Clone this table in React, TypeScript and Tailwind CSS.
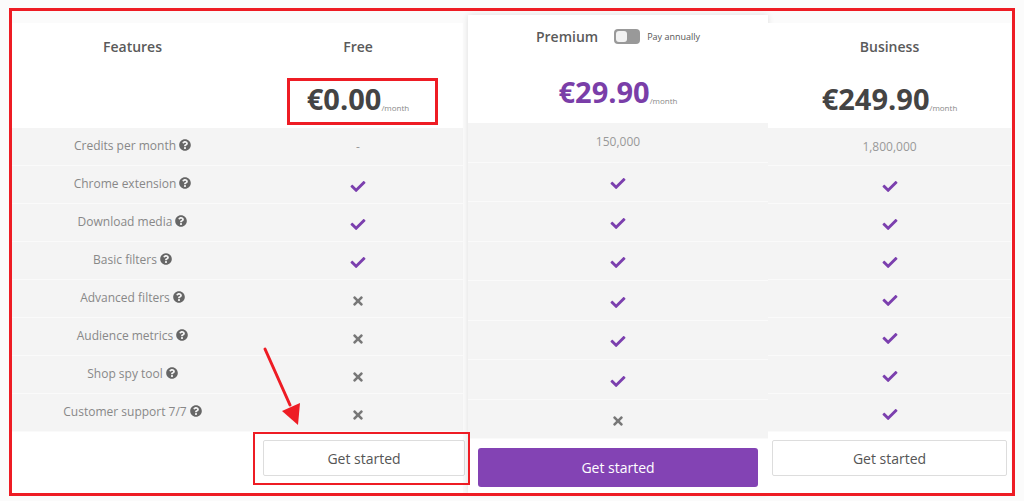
import React from "react";
import { FaCheck, FaTimes, FaQuestionCircle } from "react-icons/fa";

type Cell = "check" | "x" | string;

const features = [
  "Credits per month",
  "Chrome extension",
  "Download media",
  "Basic filters",
  "Advanced filters",
  "Audience metrics",
  "Shop spy tool",
  "Customer support 7/7",
];

const free: Cell[] = ["-", "check", "check", "check", "x", "x", "x", "x"];
const premium: Cell[] = ["150,000", "check", "check", "check", "check", "check", "check", "x"];
const business: Cell[] = ["1,800,000", "check", "check", "check", "check", "check", "check", "check"];

function CellContent({ v }: { v: Cell }) {
  if (v === "check") return <FaCheck className="text-[#7b3fae] w-[18px] h-[15px] mt-[4px]" />;
  if (v === "x") return <FaTimes className="text-[#777] w-[12px] h-[14px] mt-[4px]" />;
  return <span className="text-[12px] text-[#999]">{v}</span>;
}

function Rows({ cells, h }: { cells: Cell[]; h: string }) {
  return (
    <div className="flex flex-col bg-[#f4f4f4]">
      {cells.map((c, i) => (
        <div
          key={i}
          className={`flex justify-center items-center border-b border-[#fafafa] ${h}`}
        >
          <CellContent v={c} />
        </div>
      ))}
    </div>
  );
}

function Price({ amount, purple }: { amount: string; purple?: boolean }) {
  return (
    <div className="flex items-end justify-center">
      <span
        className={`text-[29px] font-bold leading-none ${
          purple ? "text-[#7a3ea8]" : "text-[#444]"
        }`}
      >
        {amount}
      </span>
      <span className="text-[8px] text-[#888] leading-none mb-[1px]">/month</span>
    </div>
  );
}

export default function App() {
  return (
    <div
      className="relative w-[1024px] h-[501px] bg-[#fbfbfb] overflow-hidden"
      style={{ fontFamily: "'Open Sans', 'Liberation Sans', sans-serif" }}
    >
      <div className="flex items-start pl-[12px] pt-[15px]">
        {/* Features */}
        <div className="w-[241px] mt-[8px] flex flex-col">
          <div className="h-[105px] bg-white flex justify-center pt-[13px]">
            <span className="text-[14px] font-semibold text-[#5a5a5a]">Features</span>
          </div>
          <div className="flex flex-col bg-[#f4f4f4]">
            {features.map((f) => (
              <div
                key={f}
                className="h-[38px] flex justify-center items-center border-b border-[#fafafa] pb-[1px]"
              >
                <span className="text-[12px] text-[#888]">{f}</span>
                <FaQuestionCircle className="text-[#666] w-[12px] h-[12px] ml-[3px] -mt-[3px]" />
              </div>
            ))}
          </div>
          <div className="h-[61px] bg-white" />
        </div>

        {/* Free */}
        <div className="w-[210px] mt-[8px] flex flex-col">
          <div className="h-[105px] bg-white flex flex-col items-center pt-[13px]">
            <span className="text-[14px] font-semibold text-[#5a5a5a]">Free</span>
            <div className="mt-[27px]">
              <Price amount="€0.00" />
            </div>
          </div>
          <Rows cells={free} h="h-[38px]" />
          <div className="h-[61px] bg-white pt-[8px] pl-[10px] pr-[0px]">
            <button className="w-[202px] h-[36px] border border-[#ddd] rounded-[2px] bg-white text-[14px] text-[#555]">
              Get started
            </button>
          </div>
        </div>

        {/* Premium */}
        <div className="w-[300px] ml-[5px] flex flex-col bg-white shadow-[0_0_6px_rgba(0,0,0,0.12)]">
          <div className="h-[108px] flex flex-col items-center pt-[11px]">
            <div className="flex items-center">
              <span className="text-[14px] font-semibold text-[#5a5a5a]">Premium</span>
              <div className="ml-[16px] w-[26px] h-[15px] rounded-[4px] bg-[#999] p-[2px] flex">
                <div className="w-[11px] h-[11px] rounded-[3px] bg-[#f2f2f2]" />
              </div>
              <span className="ml-[7px] text-[9px] text-[#555]">Pay annually</span>
            </div>
            <div className="mt-[30px]">
              <Price amount="€29.90" purple />
            </div>
          </div>
          <div className="flex flex-col bg-[#f4f4f4]">
            {premium.map((c, i) => (
              <div
                key={i}
                className={`flex justify-center h-[39.5px] border-b border-[#fafafa] ${
                  i === 0 ? "items-start pt-[10px]" : "items-center"
                }`}
              >
                <CellContent v={c} />
              </div>
            ))}
          </div>
          <div className="h-[54px] px-[10px] pt-[9px]">
            <button className="w-full h-[39px] rounded-[3px] bg-[#8343b4] text-white text-[14px]">
              Get started
            </button>
          </div>
        </div>

        {/* Business */}
        <div className="w-[243px] mt-[8px] flex flex-col">
          <div className="h-[105px] bg-white flex flex-col items-center pt-[13px]">
            <span className="text-[14px] font-semibold text-[#5a5a5a]">Business</span>
            <div className="mt-[27px]">
              <Price amount="€249.90" />
            </div>
          </div>
          <Rows cells={business} h="h-[38px]" />
          <div className="h-[61px] bg-white pt-[8px] px-[4px]">
            <button className="w-full h-[36px] border border-[#ddd] rounded-[2px] bg-white text-[14px] text-[#555]">
              Get started
            </button>
          </div>
        </div>
      </div>

      {/* Red annotations */}
      <div className="pointer-events-none absolute left-[9px] top-[8px] w-[1006px] h-[488px] border-[3px] border-[#ee1c24]" />
      <div className="pointer-events-none absolute left-[287px] top-[78px] w-[151px] h-[47px] border-[3px] border-[#ee1c24]" />
      <div className="pointer-events-none absolute left-[253px] top-[432px] w-[217px] h-[53px] border-[2px] border-[#ee1c24]" />
      <svg
        className="pointer-events-none absolute left-[255px] top-[345px]"
        width="60"
        height="85"
        viewBox="0 0 60 85"
      >
        <line x1="10" y1="4" x2="35" y2="60" stroke="#ee1c24" strokeWidth="3" strokeLinecap="round" />
        <polygon points="27,66 45,58 43,80" fill="#ee1c24" />
      </svg>
    </div>
  );
}
